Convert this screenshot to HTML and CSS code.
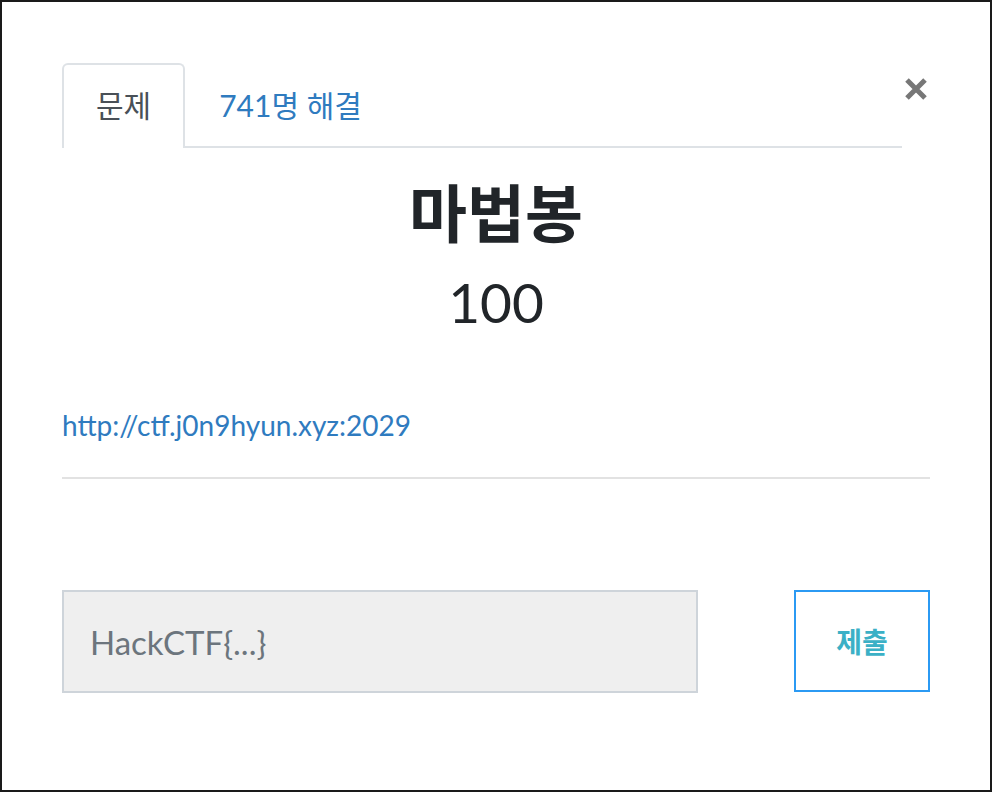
FILE: index.html
```html
<!DOCTYPE html>
<html lang="ko">
<head>
<meta charset="utf-8">
<title>마법봉</title>
<link rel="stylesheet" href="styles.css">
</head>
<body>
<div class="frame">
  <div class="header">
    <ul class="tabs">
      <li class="tab active">문제</li>
      <li class="tab link">741명 해결</li>
    </ul>
    <button class="close" aria-label="close">
      <svg width="24" height="24" viewBox="0 0 24 24"><path d="M3 3 L21 21 M21 3 L3 21" stroke="#777" stroke-width="5" stroke-linecap="butt"/></svg>
    </button>
  </div>
  <h1 class="title">마법봉</h1>
  <div class="points">100</div>
  <a class="url" href="#">http://ctf.j0n9hyun.xyz:2029</a>
  <hr class="sep">
  <form class="submit-row">
    <input class="flag" type="text" placeholder="HackCTF{...}">
    <button class="submit" type="button">제출</button>
  </form>
</div>
</body>
</html>
```
FILE: styles.css
```css
* { box-sizing: border-box; }
html, body { margin: 0; padding: 0; background: #fff; }
body { font-family: Lato, "Noto Sans CJK KR", sans-serif; color: #212529; }
.frame {
  width: 992px;
  height: 792px;
  border: 2px solid #1a1a1a;
  padding: 61px 60px 0 60px;
}
.header { display: flex; align-items: flex-start; }
.tabs {
  list-style: none;
  margin: 0;
  padding: 0;
  display: flex;
  flex: 0 0 840px;
  border-bottom: 2px solid #dee2e6;
  height: 85px;
}
.tab {
  padding: 0 32px;
  height: 85px;
  line-height: 81px;
  font-size: 30px;
  border: 2px solid transparent;
  border-bottom: none;
  border-radius: 6px 6px 0 0;
}
.tab.active {
  color: #495057;
  border-color: #dee2e6;
  background: #fff;
  margin-bottom: -2px;
  height: 85px;
}
.tab.link { color: #2f7bbf; padding-left: 32px; }
.close {
  flex: 1;
  background: none;
  border: none;
  padding: 0;
  margin-top: 14px;
  display: flex;
  justify-content: flex-end;
  padding-right: 2px;
  height: 24px;
}
.title {
  margin: 28px 0 0;
  text-align: center;
  font-size: 63px;
  line-height: 73px;
  font-weight: 700;
}
.points {
  margin-top: 18px;
  text-align: center;
  font-size: 55px;
  line-height: 70px;
}
.url {
  display: block;
  margin-top: 68px;
  font-size: 28px;
  line-height: 40px;
  color: #2f7bbf;
  text-decoration: none;
}
.sep {
  margin: 32px 0 0;
  border: none;
  border-top: 2px solid #e2e2e2;
}
.submit-row {
  margin-top: 111px;
  display: flex;
  justify-content: space-between;
}
.flag {
  width: 636px;
  height: 103px;
  background: #efefef;
  border: 2px solid #ced4da;
  padding: 0 26px;
  font-family: Lato, "Noto Sans CJK KR", sans-serif;
  font-size: 33px;
  color: #495057;
}
.flag::placeholder { color: #6c757d; }
.submit {
  width: 136px;
  height: 102px;
  background: #fff;
  border: 2px solid #2b9af3;
  font-family: "Noto Sans CJK KR", sans-serif;
  font-weight: 700;
  font-size: 28px;
  color: #3bb0c6;
}
```
